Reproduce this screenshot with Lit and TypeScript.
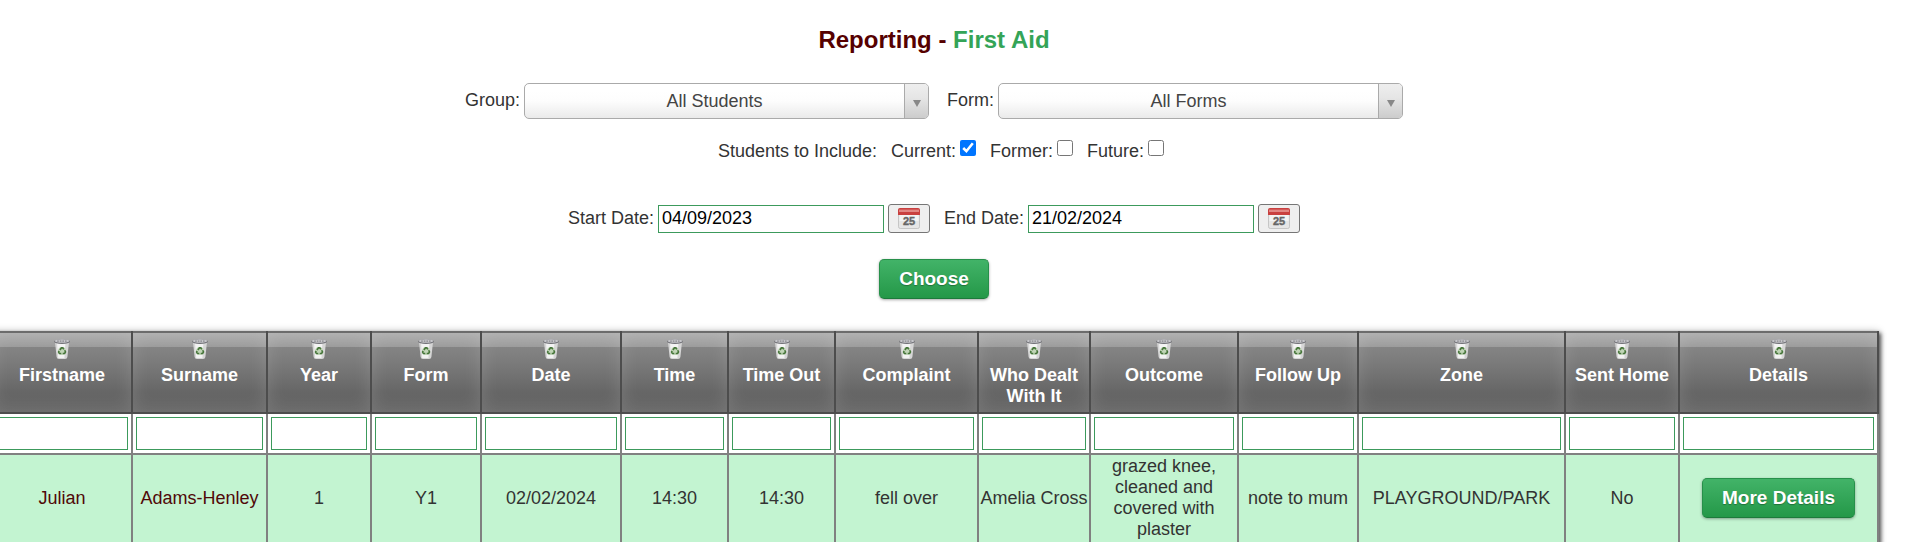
import { LitElement, html, css, svg } from "lit";
import { customElement } from "lit/decorators.js";

interface Column {
  label: string;
  share: number;
}

const columns: Column[] = [
  { label: "Firstname", share: 140 },
  { label: "Surname", share: 135 },
  { label: "Year", share: 104 },
  { label: "Form", share: 110 },
  { label: "Date", share: 140 },
  { label: "Time", share: 107 },
  { label: "Time Out", share: 107 },
  { label: "Complaint", share: 143 },
  { label: "Who Dealt With It", share: 112 },
  { label: "Outcome", share: 148 },
  { label: "Follow Up", share: 120 },
  { label: "Zone", share: 207 },
  { label: "Sent Home", share: 114 },
  { label: "Details", share: 199 },
];

const totalShare = columns.reduce((sum, c) => sum + c.share, 0);

const incident = {
  firstname: "Julian",
  surname: "Adams-Henley",
  rest: [
    "1",
    "Y1",
    "02/02/2024",
    "14:30",
    "14:30",
    "fell over",
    "Amelia Cross",
    "grazed knee, cleaned and covered with plaster",
    "note to mum",
    "PLAYGROUND/PARK",
    "No",
  ],
};

const binIcon = html`<svg class="bin-icon" viewBox="0 0 16 20" aria-hidden="true">
  ${svg`
    <path d="M1 3 L2.6 18 Q2.8 20 5 20 H11 Q13.2 20 13.4 18 L15 3 Z" fill="#d6d6d6" />
    <path d="M3 4 L4.2 19 H10.4 L11.4 4 Z" fill="#f3f3f3" />
    <ellipse cx="8" cy="2.6" rx="7.9" ry="2.3" fill="#6f6f75" />
    <ellipse cx="8" cy="2" rx="7.2" ry="1.7" fill="#c6c6ca" />
    <path d="M3.2 2.1 H12.8" stroke="#707076" stroke-width=".9" stroke-dasharray="1.6 1" />
    <circle cx="8" cy="12" r="3.9" fill="#c2d6b8" />
    <g fill="none" stroke="#46753a" stroke-width="1.6">
      <path d="M5.9 10.9 L7.4 8.9 H8.8 L9.8 10.4" />
      <path d="M10.7 11.2 L11.5 13 L10.6 14.5 H8.7" />
      <path d="M7.3 14.5 H5.4 L4.6 13.1 L5.2 12" />
    </g>`}
</svg>`;

const calendarIcon = html`<svg class="calendar-icon" viewBox="0 0 22 21" aria-hidden="true">
  ${svg`
    <rect x=".5" y="1" width="21" height="19.5" rx="1.8" fill="#e6e6e6" stroke="#bdbdbd" stroke-width=".8" />
    <rect x="1.5" y="7" width="19" height="6" fill="#f3f3f3" />
    <path d="M0 7 V2 Q0 0 2 0 H20 Q22 0 22 2 V7 Z" fill="#c9403f" />
    <path d="M1 1.6 H21 V4 H1 Z" fill="#e28683" />
    <text x="11" y="17.4" text-anchor="middle" class="calendar-day">25</text>`}
</svg>`;

@customElement("app-root")
export class AppRoot extends LitElement {
  static styles = css`
    :host {
      display: block;
      overflow: hidden;
      background: #fff;
      color: #333;
      font: 18px/21px "Liberation Sans", Arial, sans-serif;
    }

    *,
    *::before {
      box-sizing: border-box;
    }

    input,
    select,
    button {
      font: inherit;
      margin: 0;
    }

    .report {
      margin: 0 27px 0 -9px;
      padding-top: 26px;
    }

    .title {
      margin: 0 0 29px;
      padding-right: 2px;
      font-size: 24px;
      line-height: 28px;
      text-align: center;
      color: #560000;
    }

    .title-topic {
      color: #34a457;
    }

    .row {
      display: flex;
      justify-content: center;
      align-items: center;
      padding-right: 2px;
    }

    .field {
      display: flex;
      align-items: center;
      gap: 4px;
    }

    .selects {
      gap: 18px;
      margin-bottom: 21px;
    }

    .picker-label {
      padding-bottom: 2px;
    }

    .picker {
      display: grid;
      grid-template-columns: 1fr 24px;
      width: 405px;
      height: 36px;
      border: 1px solid #aaa;
      border-radius: 5px;
      overflow: hidden;
      background: linear-gradient(#fff 20%, #fdfdfd 50%, #eee 90%, #eaeaea);
    }

    .picker-select {
      grid-area: 1 / 1 / 2 / 3;
      width: 100%;
      padding: 0 24px 0 0;
      border: 0;
      background: none;
      appearance: none;
      color: #444;
      text-align: center;
      text-align-last: center;
    }

    .picker-arrow {
      grid-area: 1 / 2;
      display: grid;
      place-items: center;
      padding-top: 4px;
      border-left: 1px solid #aaa;
      background: linear-gradient(#eee, #e6e6e6 40%, #ccc);
      pointer-events: none;
    }

    .picker-arrow::before {
      content: "";
      border: 4px solid transparent;
      border-top: 7px solid #888;
      border-bottom: 0;
    }

    .includes {
      gap: 14px;
      margin-bottom: 42px;
      padding-left: 14px;
    }

    .includes-label,
    .include-text {
      padding-top: 1px;
    }

    .include {
      display: flex;
      align-items: flex-start;
      gap: 4px;
    }

    .include-box {
      width: 16px;
      height: 16px;
    }

    .dates {
      gap: 14px;
      margin-bottom: 26px;
    }

    .date-input {
      width: 226px;
      height: 28px;
      padding: 0 3px;
      border: 1px solid #3c9a5c;
      background: #fff;
      color: #000;
    }

    .date-button {
      display: grid;
      place-items: center;
      width: 42px;
      height: 29px;
      padding: 0;
      border: 1px solid #767676;
      border-radius: 3px;
      background: #efefef;
    }

    .calendar-icon {
      width: 22px;
      height: 21px;
    }

    .calendar-day {
      font: bold 11px "Liberation Sans", Arial, sans-serif;
      fill: #666;
      stroke: #666;
      stroke-width: 0.4px;
    }

    .actions {
      margin-bottom: 32px;
    }

    .green-button {
      height: 40px;
      padding: 0 19px 2px;
      border: 1px solid #27904a;
      border-bottom-color: #1d7a3b;
      border-radius: 5px;
      background: linear-gradient(#42b368, #249848);
      box-shadow: 0 1px 3px rgba(0, 0, 0, 0.35);
      color: #fff;
      font-size: 19px;
      font-weight: bold;
      text-shadow: 0 1px 1px rgba(0, 0, 0, 0.3);
      white-space: nowrap;
    }

    .incidents {
      width: 100%;
      table-layout: fixed;
      border-collapse: collapse;
      box-shadow: 2px 2px 4px #555, 0 0 8px rgba(0, 0, 0, 0.2);
    }

    .head-cell {
      height: 81px;
      padding: 6px 4px 3px;
      border: 2px solid #4d4d4d;
      border-top-color: #6c6c6c;
      vertical-align: top;
      color: #fff;
      background:
        linear-gradient(rgba(255, 255, 255, 0.28), rgba(255, 255, 255, 0.2)) top / 100% 14px no-repeat,
        linear-gradient(#8c8c8c, #7c7c7c 35%, #666 75%, #646464);
      box-shadow: inset 0 0 18px rgba(255, 255, 255, 0.14);
    }

    .bin-button {
      display: block;
      margin: 0 auto 6px;
      padding: 0;
      border: 0;
      background: none;
    }

    .bin-icon {
      display: block;
      width: 16px;
      height: 20px;
    }

    .filter-cell {
      padding: 3px;
      border: 2px solid #808080;
      background: #fff;
    }

    .filter-input {
      display: block;
      width: 100%;
      height: 33px;
      border: 1px solid #3c9a5c;
      background: #fff;
    }

    .cell {
      padding: 1px 0 4px;
      border: 2px solid #808080;
      background: #c3f4d1;
      text-align: center;
    }

    .name-link {
      color: #500808;
      text-decoration: none;
    }
  `;

  private picker(id: string, label: string, value: string) {
    return html`<div class="field">
      <label class="picker-label" for=${id}>${label}</label>
      <div class="picker">
        <select class="picker-select" id=${id}>
          <option>${value}</option>
        </select>
        <span class="picker-arrow"></span>
      </div>
    </div>`;
  }

  private include(label: string, checked: boolean) {
    return html`<label class="include">
      <span class="include-text">${label}</span>
      <input class="include-box" type="checkbox" .checked=${checked} />
    </label>`;
  }

  private dateField(id: string, label: string, value: string) {
    return html`<div class="field">
      <label for=${id}>${label}</label>
      <input class="date-input" id=${id} type="text" .value=${value} />
      <button class="date-button" type="button" aria-label="Open calendar">${calendarIcon}</button>
    </div>`;
  }

  render() {
    return html`<main class="report">
      <h1 class="title">Reporting - <span class="title-topic">First Aid</span></h1>
      <div class="row selects">
        ${this.picker("group", "Group:", "All Students")} ${this.picker("form", "Form:", "All Forms")}
      </div>
      <div class="row includes" role="group" aria-labelledby="include-label">
        <span class="includes-label" id="include-label">Students to Include:</span>
        ${this.include("Current:", true)} ${this.include("Former:", false)} ${this.include("Future:", false)}
      </div>
      <div class="row dates">
        ${this.dateField("start", "Start Date:", "04/09/2023")}
        ${this.dateField("end", "End Date:", "21/02/2024")}
      </div>
      <div class="row actions">
        <button class="green-button" type="button">Choose</button>
      </div>
      <table class="incidents">
        <colgroup>
          ${columns.map((c) => html`<col style="width:${(c.share / totalShare) * 100}%" />`)}
        </colgroup>
        <thead>
          <tr>
            ${columns.map(
              (c) => html`<th class="head-cell" scope="col">
                <button class="bin-button" type="button" aria-label="Remove column ${c.label}">${binIcon}</button>
                ${c.label}
              </th>`
            )}
          </tr>
          <tr>
            ${columns.map(
              (c) => html`<td class="filter-cell">
                <input class="filter-input" type="text" aria-label="Filter ${c.label}" />
              </td>`
            )}
          </tr>
        </thead>
        <tbody>
          <tr>
            <td class="cell"><a class="name-link" href="#">${incident.firstname}</a></td>
            <td class="cell"><a class="name-link" href="#">${incident.surname}</a></td>
            ${incident.rest.map((text) => html`<td class="cell">${text}</td>`)}
            <td class="cell"><button class="green-button" type="button">More Details</button></td>
          </tr>
        </tbody>
      </table>
    </main>`;
  }
}
